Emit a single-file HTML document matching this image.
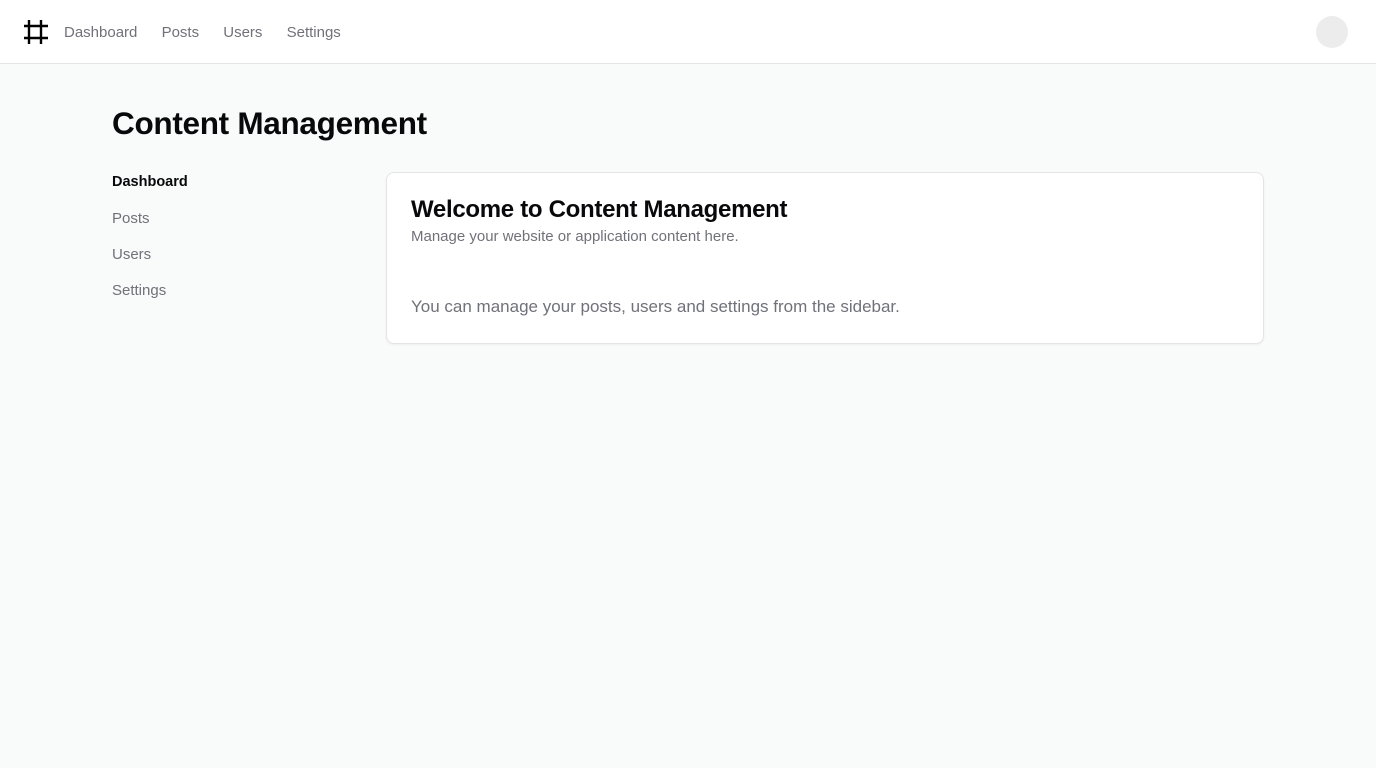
<!DOCTYPE html>
<html><head><meta charset="utf-8"><style>
*{box-sizing:border-box;margin:0;padding:0}
body{width:1376px;height:768px;background:#f9fafa;font-family:"Liberation Sans",sans-serif;color:#09090b;overflow:hidden}
.top{height:64px;background:#fff;border-bottom:1px solid #e4e4e7;position:relative}
.logo{position:absolute;left:24px;top:20px}
.nav{position:absolute;left:64px;top:24px;font-size:15px;color:#71717a}
.nav span{margin-right:20px}
.av{position:absolute;left:1316px;top:16px;width:32px;height:32px;border-radius:50%;background:#ececec}
h1{position:absolute;left:112px;top:105px;font-size:31.5px;font-weight:700;letter-spacing:-0.3px}
.side{position:absolute;left:112px;top:174px;font-size:15px;color:#71717a}
.side div{height:36px}
.side .a{color:#09090b;font-weight:700;font-size:14.5px}
.card{position:absolute;left:386px;top:172px;width:878px;height:172px;background:#fff;border:1px solid #e4e4e7;border-radius:8px;box-shadow:0 1px 2px rgba(0,0,0,.05)}
.card h2{position:absolute;left:24px;top:23px;font-size:24px;font-weight:700;letter-spacing:-0.3px}
.card .s{position:absolute;left:24px;top:55px;font-size:15px;color:#71717a}
.card .b{position:absolute;left:24px;top:124px;font-size:17px;color:#71717a}
</style></head><body>
<div class="top">
<svg class="logo" width="24" height="24" viewBox="0 0 24 24" fill="none" stroke="#000" stroke-width="2.4"><path d="M5 0v24M17 0v24M0 6h24M0 18h24"/></svg>
<div class="nav"><span>Dashboard</span> <span>Posts</span> <span>Users</span> <span>Settings</span></div>
<div class="av"></div>
</div>
<h1>Content Management</h1>
<div class="side"><div class="a">Dashboard</div><div>Posts</div><div>Users</div><div>Settings</div></div>
<div class="card"><h2>Welcome to Content Management</h2><div class="s">Manage your website or application content here.</div><div class="b">You can manage your posts, users and settings from the sidebar.</div></div>
</body></html>
